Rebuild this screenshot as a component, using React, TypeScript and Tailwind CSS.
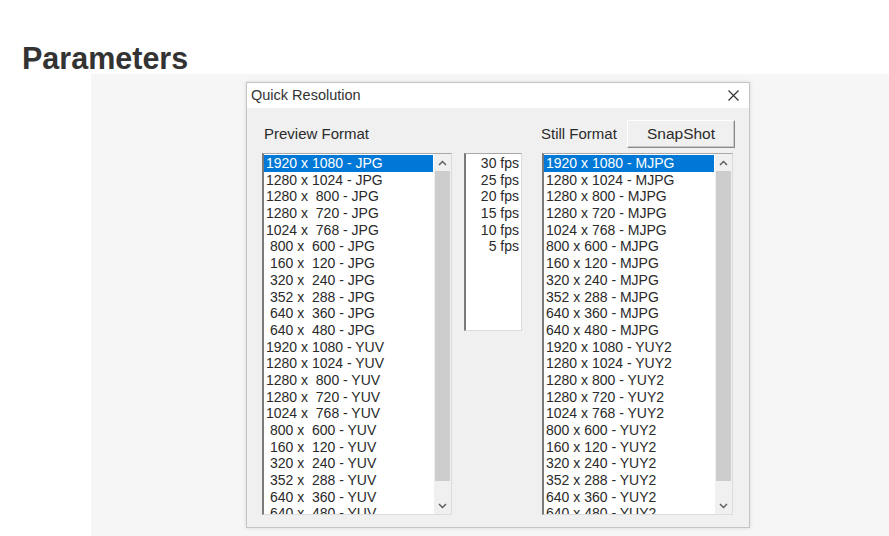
import React from "react";

const leftItems = [
  "1920 x 1080 - JPG",
  "1280 x 1024 - JPG",
  "1280 x  800 - JPG",
  "1280 x  720 - JPG",
  "1024 x  768 - JPG",
  " 800 x  600 - JPG",
  " 160 x  120 - JPG",
  " 320 x  240 - JPG",
  " 352 x  288 - JPG",
  " 640 x  360 - JPG",
  " 640 x  480 - JPG",
  "1920 x 1080 - YUV",
  "1280 x 1024 - YUV",
  "1280 x  800 - YUV",
  "1280 x  720 - YUV",
  "1024 x  768 - YUV",
  " 800 x  600 - YUV",
  " 160 x  120 - YUV",
  " 320 x  240 - YUV",
  " 352 x  288 - YUV",
  " 640 x  360 - YUV",
  " 640 x  480 - YUV",
];

const rightItems = [
  "1920 x 1080 - MJPG",
  "1280 x 1024 - MJPG",
  "1280 x 800 - MJPG",
  "1280 x 720 - MJPG",
  "1024 x 768 - MJPG",
  "800 x 600 - MJPG",
  "160 x 120 - MJPG",
  "320 x 240 - MJPG",
  "352 x 288 - MJPG",
  "640 x 360 - MJPG",
  "640 x 480 - MJPG",
  "1920 x 1080 - YUY2",
  "1280 x 1024 - YUY2",
  "1280 x 800 - YUY2",
  "1280 x 720 - YUY2",
  "1024 x 768 - YUY2",
  "800 x 600 - YUY2",
  "160 x 120 - YUY2",
  "320 x 240 - YUY2",
  "352 x 288 - YUY2",
  "640 x 360 - YUY2",
  "640 x 480 - YUY2",
];

const fps = ["30 fps", "25 fps", "20 fps", "15 fps", "10 fps", "5 fps"];

function Chevron({ up }: { up: boolean }) {
  return (
    <svg width="9" height="6" viewBox="0 0 9 6">
      <polyline
        points={up ? "1,5 4.5,1.5 8,5" : "1,1 4.5,4.5 8,1"}
        fill="none"
        stroke="#5a5a5a"
        strokeWidth="1.4"
      />
    </svg>
  );
}

function Scrollbar() {
  return (
    <div className="flex w-[17px] flex-col bg-[#f0f0f0]">
      <div className="flex h-[17px] items-center justify-center">
        <Chevron up />
      </div>
      <div className="mx-[1px] h-[310px] bg-[#cdcdcd]" />
      <div className="flex-1" />
      <div className="flex h-[17px] items-center justify-center">
        <Chevron up={false} />
      </div>
    </div>
  );
}

function ListBox({ items, width }: { items: string[]; width: string }) {
  return (
    <div
      className={`flex h-[362px] ${width} border-b border-r border-t border-l-2 border-b-[#dcdcdc] border-l-[#7a7a7a] border-r-[#dcdcdc] border-t-[#a8a8a8] bg-white`}
    >
      <div className="flex-1 overflow-hidden pr-[1px] pt-[1px]">
        {items.map((t, i) => (
          <div
            key={i}
            className={`h-[16.7px] whitespace-pre pl-[2px] leading-[16.7px] ${
              i === 0 ? "bg-[#0078d7] text-white" : "text-[#2a2a2a]"
            }`}
          >
            {t}
          </div>
        ))}
      </div>
      <Scrollbar />
    </div>
  );
}

export default function App() {
  return (
    <div
      className="w-[889px] h-[536px] overflow-hidden bg-white"
      style={{ fontFamily: '"Liberation Sans", Arial, sans-serif' }}
    >
      <h2 className="ml-[22px] mt-[43px] text-[30.5px] font-bold leading-[30px] text-[#333333]">
        Parameters
      </h2>
      <div className="ml-[91px] mt-[1px] h-[462px] bg-[#f6f6f6] pt-[8px]">
        <div className="ml-[155px] w-[504px] border border-[#c4c4c4] shadow-[0_0_4px_rgba(0,0,0,0.12)]">
          <div className="flex h-[25px] items-center justify-between bg-white pl-[4px] pr-[10px] text-[14.5px] text-[#333333]">
            <span>Quick Resolution</span>
            <svg width="11" height="11" viewBox="0 0 11 11">
              <path d="M0.5 0.5 L10.5 10.5 M10.5 0.5 L0.5 10.5" stroke="#333" strokeWidth="1.2" />
            </svg>
          </div>
          <div className="bg-[#f0f0f0] pb-[12px] pl-[15px] pt-[12px] text-[14px]">
            <div className="flex h-[28px] items-center">
              <div className="w-[279px] pl-[2px] text-[15px] text-[#2a2a2a]">Preview Format</div>
              <div className="w-[86px] text-[15px] text-[#2a2a2a]">Still Format</div>
              <div className="flex h-[28px] w-[108px] items-center justify-center border border-b-[#8a8a8a] border-l-white border-r-[#8a8a8a] border-t-white bg-[#f0f0f0] text-[15.5px] text-[#2a2a2a] shadow-[inset_-1px_-1px_0_#c8c8c8]">
                SnapShot
              </div>
            </div>
            <div className="mt-[5px] flex items-start">
              <ListBox items={leftItems} width="w-[190px]" />
              <div className="ml-[12px] h-[178px] w-[58px] border-b border-r border-t border-l-2 border-b-[#dcdcdc] border-l-[#7a7a7a] border-r-[#dcdcdc] border-t-[#a8a8a8] bg-white pr-[2px] pt-[1px]">
                {fps.map((f) => (
                  <div key={f} className="h-[16.7px] text-right leading-[16.7px] text-[#2a2a2a]">
                    {f}
                  </div>
                ))}
              </div>
              <div className="ml-[20px]">
                <ListBox items={rightItems} width="w-[191px]" />
              </div>
            </div>
          </div>
        </div>
      </div>
    </div>
  );
}
